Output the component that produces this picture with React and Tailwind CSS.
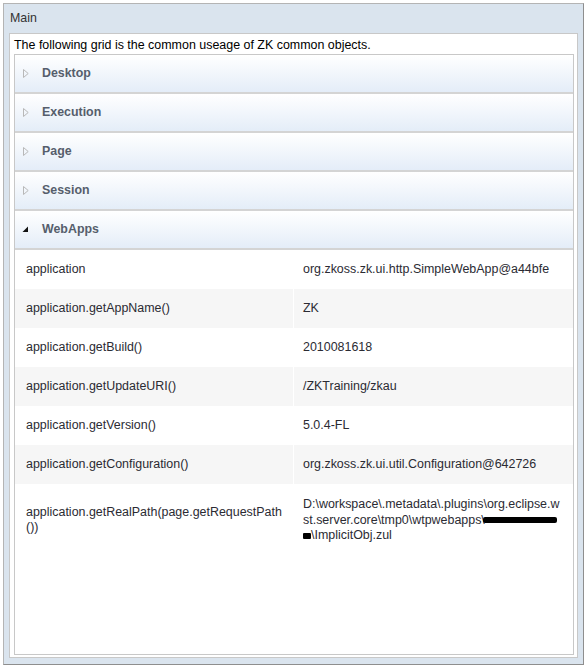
import React from "react";

const headers = ["Desktop", "Execution", "Page", "Session"];
const rows = [
  ["application", "org.zkoss.zk.ui.http.SimpleWebApp@a44bfe"],
  ["application.getAppName()", "ZK"],
  ["application.getBuild()", "2010081618"],
  ["application.getUpdateURI()", "/ZKTraining/zkau"],
  ["application.getVersion()", "5.0.4-FL"],
  ["application.getConfiguration()", "org.zkoss.zk.ui.util.Configuration@642726"],
];

function Header({ label, open }) {
  return (
    <div className="h-[39px] flex items-center border-b-2 border-[#d4d4d4] bg-gradient-to-b from-white to-[#e4edf8]">
      <div className="w-[14px] flex justify-end">
        {open ? (
          <svg width="7" height="7" viewBox="0 0 7 7">
            <polygon points="6,0.5 6,6 0.5,6" fill="#111" />
          </svg>
        ) : (
          <svg width="6" height="9" viewBox="0 0 6 9">
            <polygon points="0.5,0.5 5.2,4.5 0.5,8.5" fill="none" stroke="#b8b8b8" strokeWidth="1" />
          </svg>
        )}
      </div>
      <span className="ml-[13px] font-bold text-[12.4px] text-[#565e6c]">{label}</span>
    </div>
  );
}

export default function App() {
  return (
    <div
      className="w-[588px] h-[669px] bg-white pt-[3px] pl-[3px]"
      style={{ fontFamily: '"Liberation Sans", Arial, sans-serif' }}
    >
      <div className="w-[581px] h-[662px] border border-[#b4b4b4] border-r-[#8e8e8e] border-b-[#8e8e8e] bg-[#dae4ee] flex flex-col">
        <div className="h-[29px] flex items-center pl-[6px] text-[12.4px] text-[#333]">Main</div>
        <div className="ml-[5px] w-[569px] h-[625px] border border-[#c8c8c8] bg-white pl-[4px] pr-[3px] flex flex-col">
          <div className="h-[20px] pt-[4px] text-[12.45px] leading-[15px] text-black">
            The following grid is the common useage of ZK common objects.
          </div>
          <div className="flex-1 mb-[2px] border border-[#c8c8c8] flex flex-col">
            {headers.map((h) => (
              <Header key={h} label={h} />
            ))}
            <Header label="WebApps" open />
            <div className="flex flex-col text-[12.45px] text-[#2b2b33]">
              {rows.map(([k, v], i) => (
                <div
                  key={k}
                  className={`h-[39px] flex items-center ${i % 2 === 1 ? "bg-[#f6f6f6]" : "bg-white"}`}
                >
                  <div className="w-[279px] pl-[11px] h-full flex items-center border-r border-white">{k}</div>
                  <div className="pl-[9px] h-full flex items-center">{v}</div>
                </div>
              ))}
              <div className="flex items-center py-[13px] leading-[15.5px]">
                <div className="w-[279px] pl-[11px] flex flex-col border-r border-white">
                  <span>application.getRealPath(page.getRequestPath</span>
                  <span>())</span>
                </div>
                <div className="pl-[9px] flex flex-col whitespace-nowrap">
                  <span>D:\workspace\.metadata\.plugins\org.eclipse.w</span>
                  <span className="flex items-center">
                    st.server.core\tmp0\wtpwebapps\
                    <span className="inline-block w-[74px] h-[6px] bg-black rounded-[2px] -ml-[2px]" />
                  </span>
                  <span className="flex items-center">
                    <span className="inline-block w-[8px] h-[6px] bg-black rounded-[1px]" />
                    \ImplicitObj.zul
                  </span>
                </div>
              </div>
            </div>
          </div>
        </div>
      </div>
    </div>
  );
}
